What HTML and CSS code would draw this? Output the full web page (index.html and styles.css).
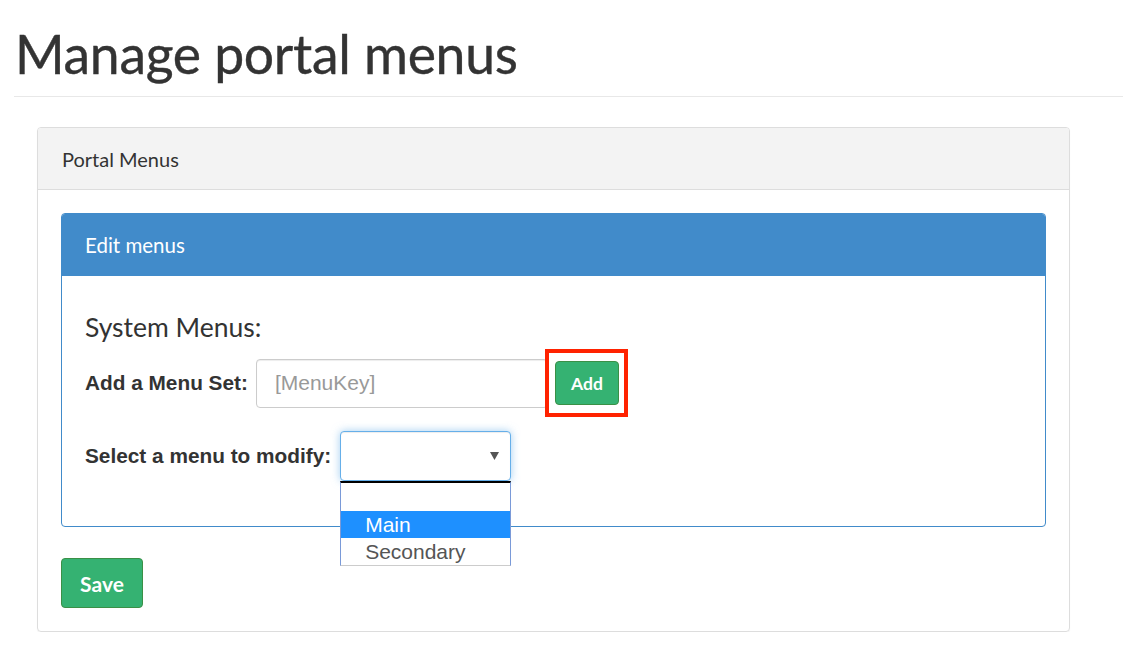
FILE: index.html
```html
<!DOCTYPE html>
<html>
<head>
<meta charset="utf-8">
<link rel="stylesheet" href="styles.css">
</head>
<body>
<div class="page">
  <h1 class="title">Manage portal menus</h1>
  <div class="rule"></div>
  <div class="panel outer">
    <div class="panel-heading">Portal Menus</div>
    <div class="panel-body">
      <div class="panel inner">
        <div class="inner-heading">Edit menus</div>
        <div class="inner-body">
          <h3 class="section-title">System Menus:</h3>
          <div class="form-row row-add">
            <label class="label">Add a Menu Set:</label>
            <input class="text-input" type="text" placeholder="[MenuKey]">
            <div class="highlight">
              <button class="btn btn-add">Add</button>
            </div>
          </div>
          <div class="form-row row-select">
            <label class="label">Select a menu to modify:</label>
            <div class="select-wrap">
              <div class="select-box">
                <svg class="caret" width="9" height="8" viewBox="0 0 9 8"><path d="M0 0 H9 L4.5 8 Z" fill="#555"/></svg>
              </div>
              <div class="dropdown">
                <div class="option empty"></div>
                <div class="option active">Main</div>
                <div class="option">Secondary</div>
              </div>
            </div>
          </div>
        </div>
      </div>
      <button class="btn btn-save">Save</button>
    </div>
  </div>
</div>
</body>
</html>
```
FILE: styles.css
```css
* { box-sizing: border-box; }
html, body { margin: 0; padding: 0; background: #fff; }
body { font-family: Lato, "Open Sans", sans-serif; color: #333; }

.page { padding: 0 0 0 14px; }

.title {
  margin: 0;
  padding: 20px 0 0 1px;
  font-size: 53.5px;
  font-weight: 400;
  line-height: 66px;
  color: #333;
  letter-spacing: -0.3px;
  -webkit-text-stroke: 0.4px #333;
}

.rule {
  margin-top: 10px;
  border-top: 1px solid #e8e8e8;
}

.panel { border-radius: 4px; }

.outer {
  margin: 30px 0 0 23px;
  width: 1033px;
  border: 1px solid #ddd;
  box-shadow: 0 1px 1px rgba(0,0,0,0.05);
}

.panel-heading {
  height: 62px;
  background: #f3f3f3;
  border-bottom: 1px solid #ddd;
  border-radius: 3px 3px 0 0;
  padding: 0 24px;
  display: flex;
  align-items: center;
  font-size: 20px;
  color: #333;
}

.panel-body {
  padding: 23px 23px 23px 23px;
}

.inner {
  border: 1px solid #418bca;
}

.inner-heading {
  height: 62px;
  background: #418bca;
  color: #fff;
  padding: 0 23px;
  display: flex;
  align-items: center;
  font-size: 20.5px;
  border-radius: 3px 3px 0 0;
}

.inner-body {
  padding: 37px 23px 45px 23px;
}

.section-title {
  margin: 0 0 8px 0;
  font-size: 26.5px;
  font-weight: 400;
  line-height: 28px;
  color: #333;
}

.form-row {
  display: flex;
  align-items: center;
}

.label {
  font-family: "Liberation Sans", Arial, sans-serif;
  font-weight: bold;
  font-size: 20.8px;
  color: #333;
}

.row-add .label { margin-right: 8px; }
.row-select { margin-top: 14px; }
.row-select .label { margin-right: 9px; }

.text-input {
  width: 292px;
  height: 49px;
  margin-right: -3px;
  border: 1px solid #ccc;
  border-radius: 4px;
  padding: 0 18px;
  font-family: "Liberation Sans", Arial, sans-serif;
  font-size: 21px;
  color: #555;
  box-shadow: inset 0 1px 1px rgba(0,0,0,0.075);
  outline: none;
}
.text-input::placeholder { color: #999; }

.highlight {
  position: relative;
  border: 4px solid #ff2200;
  padding: 8px 5px 8px 6px;
  background: #fff;
}

.btn {
  font-family: Lato, "Open Sans", sans-serif;
  color: #fff;
  background: #35b272;
  border: 1px solid #3a9046;
  border-radius: 4px;
  cursor: pointer;
}

.btn-add {
  display: block;
  width: 64px;
  height: 44px;
  font-size: 17.5px;
  font-weight: 700;
  padding: 0;
}

.select-wrap { position: relative; }

.select-box {
  width: 171px;
  height: 50px;
  border: 1px solid #66afe9;
  border-radius: 4px;
  box-shadow: inset 0 1px 1px rgba(0,0,0,.075), 0 0 8px rgba(102,175,233,.6);
  position: relative;
  background: #fff;
}

.caret {
  position: absolute;
  right: 11px;
  top: 20px;
}

.dropdown {
  position: absolute;
  top: 100%;
  left: 0;
  width: 171px;
  border-top: 2px solid #000;
  border-left: 1px solid #7a9ad8;
  border-right: 1px solid #7a9ad8;
  border-bottom: 1px solid #ccc;
  background: #fff;
  font-family: "Liberation Sans", Arial, sans-serif;
  font-size: 21px;
  color: #555;
  z-index: 5;
}

.option {
  height: 27px;
  line-height: 27px;
  padding-left: 24px;
}
.option.empty { height: 28px; }
.option.active { background: #1e90ff; color: #fff; }

.btn-save {
  display: block;
  margin-top: 31px;
  width: 82px;
  height: 50px;
  font-size: 21px;
  font-weight: 700;
  padding: 0;
}
```
